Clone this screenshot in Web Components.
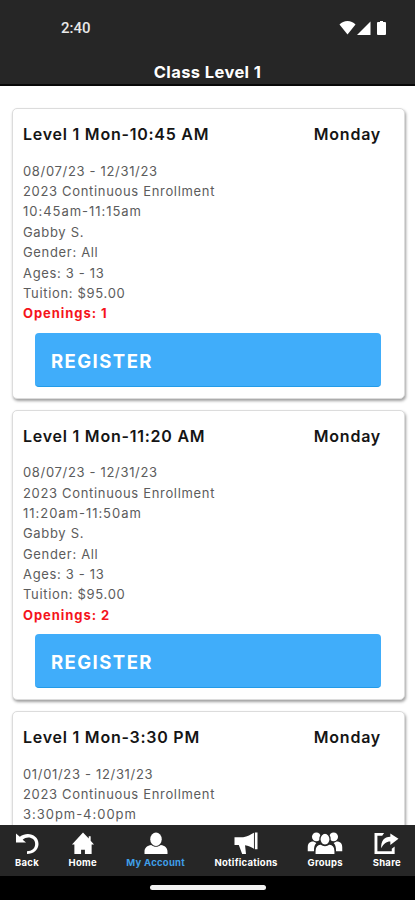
<!DOCTYPE html>
<html lang="en">
<head>
<meta charset="utf-8">
<meta name="viewport" content="width=device-width, initial-scale=1">
<title>Class Level 1</title>
<style>
    body{
        margin: 0;
        background: #fff;
        font-family: Inter, "Liberation Sans", sans-serif;
    }
</style>
</head>
<body>
<class-app></class-app>
<script>
const classes = [
    { title: "Level 1 Mon-10:45 AM", day: "Monday", dates: "08/07/23 - 12/31/23", time: "10:45am-11:15am", openings: 1 },
    { title: "Level 1 Mon-11:20 AM", day: "Monday", dates: "08/07/23 - 12/31/23", time: "11:20am-11:50am", openings: 2 },
    { title: "Level 1 Mon-3:30 PM", day: "Monday", dates: "01/01/23 - 12/31/23", time: "3:30pm-4:00pm" }
];

const icons = {
    back: `<path d="M.5 1.500v9.500H11L7.500 8C12 4 20.500 5.500 20.500 12.500c0 4.500-3.500 7.500-8.500 7.500v3c6.500 0 12-4.500 12-10.500C24 3 12.500-1 4.500 5z"/>`,
    home: `<path d="M12 .5 .5 13H3v10h7v-4.500h4V23h7V13h2.500L20 9V4.500h-2v2.300z"/>`,
    account: `<ellipse cx="12" cy="7.500" rx="6" ry="7"/><path d="M0 23v-2.500c0-4 3-6.500 7-7 3 2.500 7 2.500 10 0 4 .5 7 3 7 7V23z"/>`,
    horn: `<path d="M0 5.500h9C13.500 5 17 2.500 20.300.8v16.700c-3-1.700-6-3.300-9.300-3.700l1 9.200H8L4.500 13.500H0z"/><path d="M21.300.5H24v17.500h-2.700z"/>`,
    groups: `<circle cx="9" cy="5" r="4.600"/><circle cx="27" cy="5" r="4.600"/><path d="M0 20v-4c0-4.500 2.500-6 6-6l3 1.500c-2 2-2.500 4.500-2.500 8.500zM36 20v-4c0-4.500-2.500-6-6-6l-3 1.500c2 2 2.500 4.500 2.500 8.500z"/><g stroke="#262626" stroke-width="1.300"><ellipse cx="18" cy="7.500" rx="5.300" ry="6.200"/><path d="M7.500 23.500V20c0-4.500 2.500-7 6-7.500 2.700 2 6.300 2 9 0 3.500.5 6 3 6 7.500v3.500z"/></g>`,
    share: `<path d="M10 1H0v22h21v-8l-3 2.500V20H3V4h5z"/><path d="M16.500 1.500 25 7l-8.500 6.500V10c-4.500 0-7 2.500-9.500 7C6.500 9.500 10 5 16.500 5z"/>`
};

class StatusBar extends HTMLElement {
    constructor(){
        super();
        this.attachShadow({mode: "open"});
    }

    connectedCallback(){
        this.shadowRoot.innerHTML = `
            <style>
                :host{
                    display: flex;
                    justify-content: space-between;
                    align-items: center;
                    height: 56px;
                    padding: 0 28px 0 61px;
                    box-sizing: border-box;
                    color: #e8e8e8;
                    font: 500 15px Roboto, sans-serif;
                }
                svg{ display: block; fill: #fff; }
            </style>
            <span>2:40</span>
            <svg width="48" height="16" viewBox="0 0 48 16">
                <path d="M.5 4.500C4.500-.3 12.500-.3 16.500 4.500L8.500 14.500z"/>
                <path d="M31.500 1.500V15H18z"/>
                <path d="M39 2h2V1h3v1h2q1 0 1 1V14q0 1-1 1h-7q-1 0-1-1V3q0-1 1-1z"/>
            </svg>
        `;
    }
}
customElements.define("status-bar", StatusBar);

class PageHeader extends HTMLElement {
    constructor(){
        super();
        this.attachShadow({mode: "open"});
    }

    connectedCallback(){
        this.shadowRoot.innerHTML = `
            <style>
                :host{
                    display: block;
                    flex: none;
                    height: 86px;
                    box-sizing: border-box;
                    background: #262626;
                    border-bottom: 2px solid #080808;
                }
                h1{
                    margin: 0;
                    color: #fff;
                    font-size: 16.500px;
                    font-weight: 700;
                    line-height: 32px;
                    letter-spacing: .4px;
                    text-align: center;
                }
            </style>
            <status-bar></status-bar>
            <h1><slot></slot></h1>
        `;
    }
}
customElements.define("page-header", PageHeader);

class RegisterButton extends HTMLElement {
    constructor(){
        super();
        this.attachShadow({mode: "open"});
    }

    connectedCallback(){
        this.shadowRoot.innerHTML = `
            <style>
                :host{ display: block; }
                button{
                    display: block;
                    width: 100%;
                    height: 54px;
                    padding: 2px 16px 0;
                    border: 0;
                    border-bottom: 1px solid #239be8;
                    border-radius: 4px;
                    background: #40adfa;
                    color: #fff;
                    font: inherit;
                    font-size: 18.500px;
                    font-weight: 700;
                    letter-spacing: 1.450px;
                    text-align: left;
                }
            </style>
            <button type="button"><slot></slot></button>
        `;
    }
}
customElements.define("register-button", RegisterButton);

class ClassCard extends HTMLElement {
    constructor(){
        super();
        this.attachShadow({mode: "open"});
    }

    // A class without openings gets no details about them and no button
    set item(item){
        this.shadowRoot.innerHTML = `
            <style>
                :host{
                    display: block;
                    flex: none;
                    box-sizing: border-box;
                    padding: 14px 23px 11px 10px;
                    border: 1px solid #dcdcdc;
                    border-radius: 5px;
                    background: #fff;
                    box-shadow: 1px 2px 3px rgba(0, 0, 0, .38);
                }
                header{
                    display: flex;
                    justify-content: space-between;
                    color: #151515;
                    font-size: 16px;
                    font-weight: 600;
                    line-height: 22px;
                    letter-spacing: .76px;
                }
                .details{
                    margin-top: 15.500px;
                    color: #5c5c5c;
                    font-size: 13px;
                    line-height: 20.350px;
                    letter-spacing: .67px;
                }
                .time{ letter-spacing: .97px; }
                .openings{
                    color: #f5141c;
                    font-weight: 700;
                    letter-spacing: .95px;
                }
                register-button{ margin: 9.500px 0 0 12px; }
            </style>
            <header><span>${item.title}</span><span>${item.day}</span></header>
            <div class="details">
                <div>${item.dates}</div>
                <div>2023 Continuous Enrollment</div>
                <div class="time">${item.time}</div>
                ${item.openings ? `
                    <div>Gabby S.</div>
                    <div>Gender: All</div>
                    <div>Ages: 3 - 13</div>
                    <div>Tuition: $95.00</div>
                    <div class="openings">Openings: ${item.openings}</div>
                ` : ""}
            </div>
            ${item.openings ? `<register-button>REGISTER</register-button>` : ""}
        `;
    }
}
customElements.define("class-card", ClassCard);

class TabItem extends HTMLElement {
    constructor(){
        super();
        this.attachShadow({mode: "open"});
    }

    connectedCallback(){
        const icon = this.getAttribute("icon");
        const width = { groups: 36, share: 25 }[icon] || 24;
        this.shadowRoot.innerHTML = `
            <style>
                :host{
                    display: flex;
                    flex-direction: column;
                    align-items: center;
                    color: #fff;
                    font-size: 9.500px;
                    font-weight: 700;
                    line-height: 12px;
                    letter-spacing: .25px;
                    white-space: nowrap;
                }
                :host([active]) span{ color: #3f9fe8; }
                svg{
                    display: block;
                    height: 23px;
                    margin-bottom: 2px;
                    fill: #fff;
                }
            </style>
            <svg width="${width}" viewBox="0 0 ${width} 24">${icons[icon]}</svg>
            <span><slot></slot></span>
        `;
    }
}
customElements.define("tab-item", TabItem);

class TabBar extends HTMLElement {
    constructor(){
        super();
        this.attachShadow({mode: "open"});
    }

    connectedCallback(){
        this.shadowRoot.innerHTML = `
            <style>
                :host{
                    display: block;
                    flex: none;
                    height: 75px;
                    background: #000;
                }
                nav{
                    display: flex;
                    justify-content: space-between;
                    height: 51px;
                    padding: 7px 14px 0 15px;
                    box-sizing: border-box;
                    background: #262626;
                }
                .handle{
                    width: 116px;
                    height: 5px;
                    margin: 9px auto 0;
                    border-radius: 3px;
                    background: #f2f2f2;
                }
            </style>
            <nav>
                <tab-item icon="back">Back</tab-item>
                <tab-item icon="home">Home</tab-item>
                <tab-item icon="account" active>My Account</tab-item>
                <tab-item icon="horn">Notifications</tab-item>
                <tab-item icon="groups">Groups</tab-item>
                <tab-item icon="share">Share</tab-item>
            </nav>
            <div class="handle"></div>
        `;
    }
}
customElements.define("tab-bar", TabBar);

class ClassApp extends HTMLElement {
    constructor(){
        super();
        this.attachShadow({mode: "open"});
    }

    connectedCallback(){
        this.shadowRoot.innerHTML = `
            <style>
                :host{
                    display: flex;
                    flex-direction: column;
                    height: 900px;
                    overflow: hidden;
                }
                main{
                    display: flex;
                    flex: 1;
                    flex-direction: column;
                    gap: 10.700px;
                    min-height: 0;
                    padding: 22.300px 10px 0 12px;
                    overflow: hidden;
                }
            </style>
            <page-header>Class Level 1</page-header>
            <main></main>
            <tab-bar></tab-bar>
        `;
        const main = this.shadowRoot.querySelector("main");
        classes.forEach(item => {
            const card = document.createElement("class-card");
            card.item = item;
            main.appendChild(card);
        });
    }
}
customElements.define("class-app", ClassApp);
</script>
</body>
</html>
